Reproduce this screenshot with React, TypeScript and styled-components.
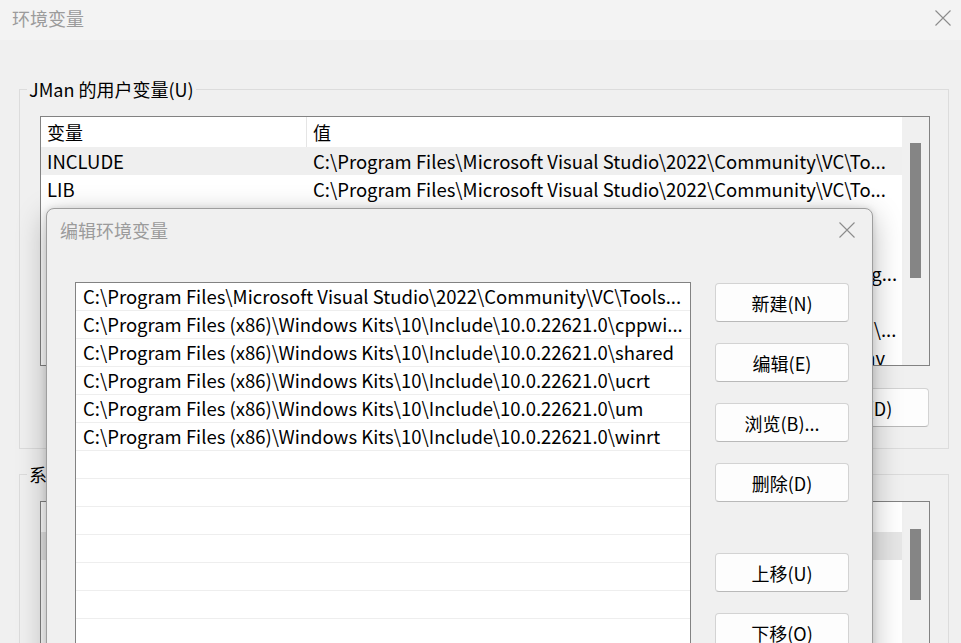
import React from 'react'
import styled, { createGlobalStyle } from 'styled-components'

const GlobalStyle = createGlobalStyle`
  * {
    box-sizing: border-box;
  }
  html,
  body {
    margin: 0;
    padding: 0;
    background: #f0f0f0;
  }
  body {
    font-family: "Noto Sans CJK SC", "Noto Sans", sans-serif;
    color: #000;
  }
`

const Desktop = styled.div`
  position: relative;
  width: 961px;
  height: 643px;
  overflow: hidden;
  background: #f0f0f0;
  font-size: 18px;
`

const MainWindow = styled.div`
  display: flex;
  flex-direction: column;
  height: 100%;
`

const TitleBar = styled.div<{ $height: number; $left: number; $right: number; $lift: number; $bg: string }>`
  flex: none;
  display: flex;
  align-items: center;
  justify-content: space-between;
  height: ${(p) => p.$height}px;
  padding: 0 ${(p) => p.$right}px ${(p) => p.$lift}px ${(p) => p.$left}px;
  background: ${(p) => p.$bg};
  color: #9b9b9b;
  font-size: 18px;
  line-height: 24px;
`

const CloseIcon = () => (
  <svg width="16" height="16" viewBox="0 0 16 16">
    <path d="M0.5 0.5 L15.5 15.5 M15.5 0.5 L0.5 15.5" stroke="#8c8c8c" strokeWidth="1.1" fill="none" />
  </svg>
)

const MainBody = styled.div`
  flex: 1;
  padding: 37px 12px 0 19px;
`

const GroupBox = styled.fieldset`
  margin: 0;
  min-width: 0;
  padding: 15px 18px 21px 20px;
  border: 1px solid #dcdcdc;

  & + & {
    margin-top: 13px;
  }
`

const Legend = styled.legend`
  margin-left: -13px;
  padding: 0 2px;
  font-size: 18px;
  line-height: 24px;
  color: #000;
`

const ListView = styled.div<{ $height: number }>`
  display: flex;
  height: ${(p) => p.$height}px;
  border: 1px solid #828282;
  background: #fff;
  overflow: hidden;
`

const Columns = styled.div`
  flex: 1;
  min-width: 0;
  display: flex;
  flex-direction: column;
`

const HeaderRow = styled.div`
  flex: none;
  display: grid;
  grid-template-columns: 265px 1fr;
  height: 30px;
  line-height: 30px;
  font-size: 18px;
`

const HeaderCell = styled.div<{ $divider?: boolean }>`
  padding-left: 6px;
  border-left: ${(p) => (p.$divider ? '1px solid #e5e5e5' : 'none')};
`

const VarRow = styled.div<{ $selected?: string }>`
  flex: none;
  display: grid;
  grid-template-columns: 265px 1fr;
  height: 28px;
  line-height: 28px;
  font-size: 18.5px;
  background: ${(p) => p.$selected || 'transparent'};
`

const Cell = styled.div<{ $value?: boolean }>`
  padding: 0 4px 0 ${(p) => (p.$value ? 7 : 6)}px;
  white-space: nowrap;
  overflow: hidden;
`

const ScrollTrack = styled.div`
  flex: none;
  width: 27px;
  padding-left: 8px;
  background: #f0f0f0;
`

const ScrollThumb = styled.div<{ $top: number; $height: number }>`
  width: 11px;
  margin-top: ${(p) => p.$top}px;
  height: ${(p) => p.$height}px;
  background: #858585;
`

const ButtonRow = styled.div`
  display: flex;
  justify-content: flex-end;
  gap: 14px;
  margin-top: 22px;
  padding-right: 1px;
`

const Button = styled.div<{ $extraTop?: number }>`
  flex: none;
  width: 134px;
  height: 39px;
  margin-top: ${(p) => p.$extraTop || 0}px;
  display: flex;
  align-items: center;
  justify-content: center;
  background: #fdfdfd;
  border: 1px solid #d3d3d3;
  border-bottom-color: #b9b9b9;
  border-radius: 4px;
  font-size: 18px;
  color: #000;
`

const Dialog = styled.div`
  position: absolute;
  left: 46px;
  top: 208px;
  width: 827px;
  height: 520px;
  display: flex;
  flex-direction: column;
  background: #f0f0f0;
  border: 1px solid #9e9e9e;
  border-radius: 8px;
  box-shadow: 0 8px 30px rgba(0, 0, 0, 0.28), 0 0 6px rgba(0, 0, 0, 0.12);
`

const DialogBody = styled.div`
  flex: 1;
  display: flex;
  gap: 24px;
  padding: 29px 23px 0 28px;
`

const PathList = styled.div`
  flex: none;
  width: 616px;
  height: 440px;
  border: 1px solid #828282;
  background: #fff;
  overflow: hidden;
`

const PathRow = styled.div`
  height: 28px;
  line-height: 27px;
  padding: 0 3px 0 7px;
  border-bottom: 1px solid #eeeeee;
  font-size: 18.5px;
  white-space: nowrap;
  overflow: hidden;
`

const ButtonColumn = styled.div`
  display: flex;
  flex-direction: column;
  gap: 21px;
  padding-top: 1px;
`

const userVars = [
  { name: 'INCLUDE', value: 'C:\\Program Files\\Microsoft Visual Studio\\2022\\Community\\VC\\To...' },
  { name: 'LIB', value: 'C:\\Program Files\\Microsoft Visual Studio\\2022\\Community\\VC\\To...' },
  { name: 'OneDrive', value: 'C:\\Users\\JMan\\OneDrive' },
  { name: 'OneDriveConsumer', value: 'C:\\Users\\JMan\\OneDrive' },
  { name: 'Path', value: 'C:\\Users\\JMan\\AppData\\Local\\Microsoft\\WindowsApps;D:\\Go\\pkg...' },
  { name: 'TEMP', value: 'C:\\Users\\JMan\\AppData\\Local\\Temp' },
  { name: 'IDEA', value: 'C:\\Program Files\\JetBrains\\IntelliJ IDEA Community Edition\\bin\\i\\...' },
  { name: 'VIRTUAL_ENV', value: 'C:\\Users\\JMan\\AppData\\Local\\Programs\\Python\\Python311\\.venv' }
]

const systemVars = [
  { name: 'ComSpec', value: 'C:\\Windows\\system32\\cmd.exe' },
  { name: 'DriverData', value: 'C:\\Windows\\System32\\Drivers\\DriverData' },
  { name: 'JAVA_HOME', value: 'C:\\Program Files\\Java\\jdk-17' },
  { name: 'NUMBER_OF_PROCESSORS', value: '16' },
  { name: 'OS', value: 'Windows_NT' }
]

const paths = [
  'C:\\Program Files\\Microsoft Visual Studio\\2022\\Community\\VC\\Tools...',
  'C:\\Program Files (x86)\\Windows Kits\\10\\Include\\10.0.22621.0\\cppwi...',
  'C:\\Program Files (x86)\\Windows Kits\\10\\Include\\10.0.22621.0\\shared',
  'C:\\Program Files (x86)\\Windows Kits\\10\\Include\\10.0.22621.0\\ucrt',
  'C:\\Program Files (x86)\\Windows Kits\\10\\Include\\10.0.22621.0\\um',
  'C:\\Program Files (x86)\\Windows Kits\\10\\Include\\10.0.22621.0\\winrt',
  '', '', '', '', '', '', '', '', '', ''
]

const App: React.FC = () => {
  return (
    <Desktop>
      <GlobalStyle />
      <MainWindow>
        <TitleBar $height={40} $left={12} $right={10} $lift={4} $bg="#f3f3f3">
          <span>环境变量</span>
          <CloseIcon />
        </TitleBar>
        <MainBody>
          <GroupBox>
            <Legend>JMan 的用户变量(U)</Legend>
            <ListView $height={250}>
              <Columns>
                <HeaderRow>
                  <HeaderCell>变量</HeaderCell>
                  <HeaderCell $divider>值</HeaderCell>
                </HeaderRow>
                {userVars.map((v, i) => (
                  <VarRow key={v.name} $selected={i === 0 ? '#efefef' : undefined}>
                    <Cell>{v.name}</Cell>
                    <Cell $value>{v.value}</Cell>
                  </VarRow>
                ))}
              </Columns>
              <ScrollTrack>
                <ScrollThumb $top={26} $height={135} />
              </ScrollTrack>
            </ListView>
            <ButtonRow>
              <Button>新建(N)...</Button>
              <Button>编辑(E)...</Button>
              <Button>删除(D)</Button>
            </ButtonRow>
          </GroupBox>
          <GroupBox>
            <Legend>系统变量(S)</Legend>
            <ListView $height={250}>
              <Columns>
                <HeaderRow>
                  <HeaderCell>变量</HeaderCell>
                  <HeaderCell $divider>值</HeaderCell>
                </HeaderRow>
                {systemVars.map((v, i) => (
                  <VarRow key={v.name} $selected={i === 0 ? '#e6e6e6' : undefined}>
                    <Cell>{v.name}</Cell>
                    <Cell $value>{v.value}</Cell>
                  </VarRow>
                ))}
              </Columns>
              <ScrollTrack>
                <ScrollThumb $top={27} $height={71} />
              </ScrollTrack>
            </ListView>
          </GroupBox>
        </MainBody>
      </MainWindow>

      <Dialog>
        <TitleBar $height={44} $left={13} $right={17} $lift={3} $bg="transparent">
          <span>编辑环境变量</span>
          <CloseIcon />
        </TitleBar>
        <DialogBody>
          <PathList>
            {paths.map((p, i) => (
              <PathRow key={i}>{p}</PathRow>
            ))}
          </PathList>
          <ButtonColumn>
            <Button>新建(N)</Button>
            <Button>编辑(E)</Button>
            <Button>浏览(B)...</Button>
            <Button>删除(D)</Button>
            <Button $extraTop={30}>上移(U)</Button>
            <Button>下移(O)</Button>
          </ButtonColumn>
        </DialogBody>
      </Dialog>
    </Desktop>
  )
}

export default App
